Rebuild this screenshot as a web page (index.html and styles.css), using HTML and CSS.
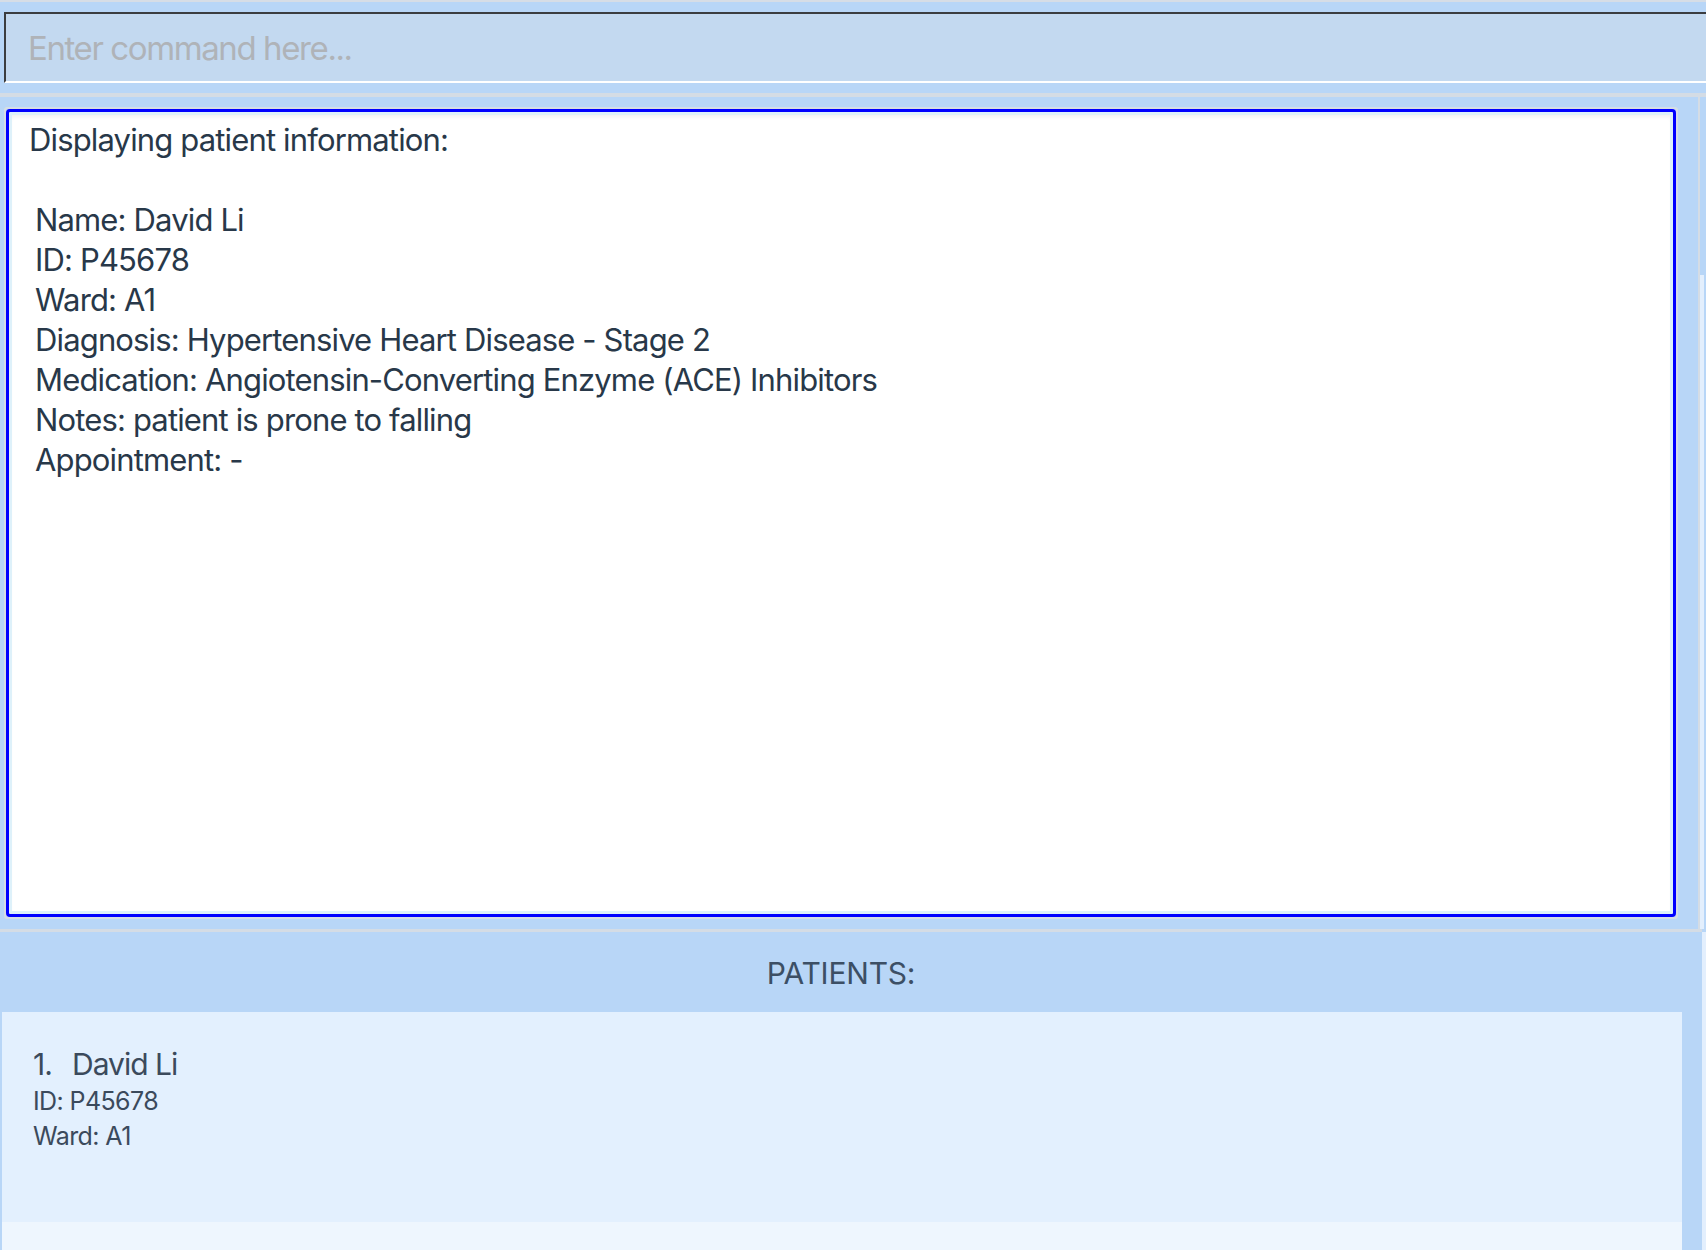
FILE: index.html
```html
<!DOCTYPE html>
<html>
<head>
<meta charset="utf-8">
<link rel="stylesheet" href="styles.css">
</head>
<body>
<div class="app">
  <div class="topline"></div>
  <div class="cmd-area">
    <div class="cmd-box"><span class="placeholder">Enter command here...</span></div>
  </div>
  <div class="divider"></div>
  <div class="result-row">
    <div class="result-panel">
      <div class="result-frame">
        <div class="result-blue">
          <div class="result-white">
            <div class="result-text">
              <div class="result-title">Displaying patient information:</div>
              <div class="result-details">
                <div>Name: David Li</div>
                <div>ID: P45678</div>
                <div>Ward: A1</div>
                <div>Diagnosis: Hypertensive Heart Disease - Stage 2</div>
                <div>Medication: Angiotensin-Converting Enzyme (ACE) Inhibitors</div>
                <div>Notes: patient is prone to falling</div>
                <div>Appointment: -</div>
              </div>
            </div>
          </div>
        </div>
      </div>
    </div>
    <div class="side-strip"><div class="side-thumb"></div></div>
  </div>
  <div class="divider2"></div>
  <div class="list-row">
    <div class="list-panel">
      <div class="list-header">PATIENTS:</div>
      <div class="cell">
        <div class="cell-name"><span class="idx">1.</span>David Li</div>
        <div class="cell-line">ID: P45678</div>
        <div class="cell-line">Ward: A1</div>
      </div>
      <div class="cell-empty"></div>
    </div>
    <div class="list-gutter"></div>
    <div class="list-strip"></div>
  </div>
</div>
</body>
</html>
```
FILE: styles.css
```css
html, body {
  margin: 0;
  padding: 0;
  height: 100%;
  overflow: hidden;
}
body {
  background: #b8d6f7;
  font-family: Inter, "Noto Sans", sans-serif;
  color: #2b3a4c;
}
.app {
  display: flex;
  flex-direction: column;
  height: 1250px;
}
.topline {
  height: 2px;
  background: #d6dde6;
}
.cmd-area {
  padding: 10px 0 10px 4px;
}
.cmd-box {
  height: 67px;
  background: #c3d9f0;
  border-top: 2px solid #3b3d40;
  border-left: 2px solid #3b3d40;
  border-bottom: 2px solid #ffffff;
  display: flex;
  align-items: center;
  padding-left: 22px;
}
.placeholder {
  font-size: 33px;
  color: #afb3b8;
  letter-spacing: -1.4px;
}
.divider {
  height: 4px;
  background: #d4dce5;
}
.result-row {
  display: flex;
  height: 832px;
}
.result-panel {
  width: 1700px;
  border-right: 2px solid #d4dce5;
  box-sizing: border-box;
  padding: 10px 20px 10px 4px;
}
.result-frame {
  height: 100%;
  box-sizing: border-box;
  border: 2px solid #d5dde6;
  border-radius: 3px;
}
.result-blue {
  height: 100%;
  box-sizing: border-box;
  border: 3px solid #0000ff;
  border-radius: 4px;
  background: #def1fa;
  padding: 3px;
}
.result-white {
  height: 100%;
  background: #ffffff;
  box-shadow: inset 0 4px 4px -2px rgba(0, 0, 0, 0.06);
  padding: 5px 17px;
  box-sizing: border-box;
}
.result-text {
  font-size: 31px;
  line-height: 40px;
  letter-spacing: -0.85px;
  color: #283849;
  white-space: nowrap;
}
.result-title {
  margin-bottom: 40px;
}
.result-details {
  padding-left: 6px;
}
.side-strip {
  width: 4px;
  background: #e3effd;
}
.side-thumb {
  height: 178px;
  background: #b8d6f7;
}
.divider2 {
  height: 3px;
  background: #d4dce5;
  margin-right: 4px;
}
.list-row {
  flex: 1;
  display: flex;
}
.list-panel {
  width: 1680px;
  padding-left: 2px;
  display: flex;
  flex-direction: column;
}
.list-header {
  height: 80px;
  margin-left: -2px;
  background: #b8d6f7;
  display: flex;
  align-items: center;
  justify-content: center;
  padding-top: 2px;
  box-sizing: border-box;
  font-size: 30px;
  color: #3c4f65;
  letter-spacing: -0.2px;
}
.cell {
  height: 210px;
  background: #e3f0fe;
  box-sizing: border-box;
  padding: 32px 0 0 31px;
  color: #3b4a5c;
}
.cell-name {
  font-size: 30px;
  line-height: 40px;
  letter-spacing: -1px;
}
.idx {
  display: inline-block;
  width: 39px;
}
.cell-line {
  font-size: 25px;
  line-height: 34.5px;
  letter-spacing: -0.6px;
}
.cell-empty {
  flex: 1;
  background: #eef6fe;
}
.list-gutter {
  width: 20px;
  background: #b8d6f7;
}
.list-strip {
  width: 4px;
  background: #e3effd;
}
```
